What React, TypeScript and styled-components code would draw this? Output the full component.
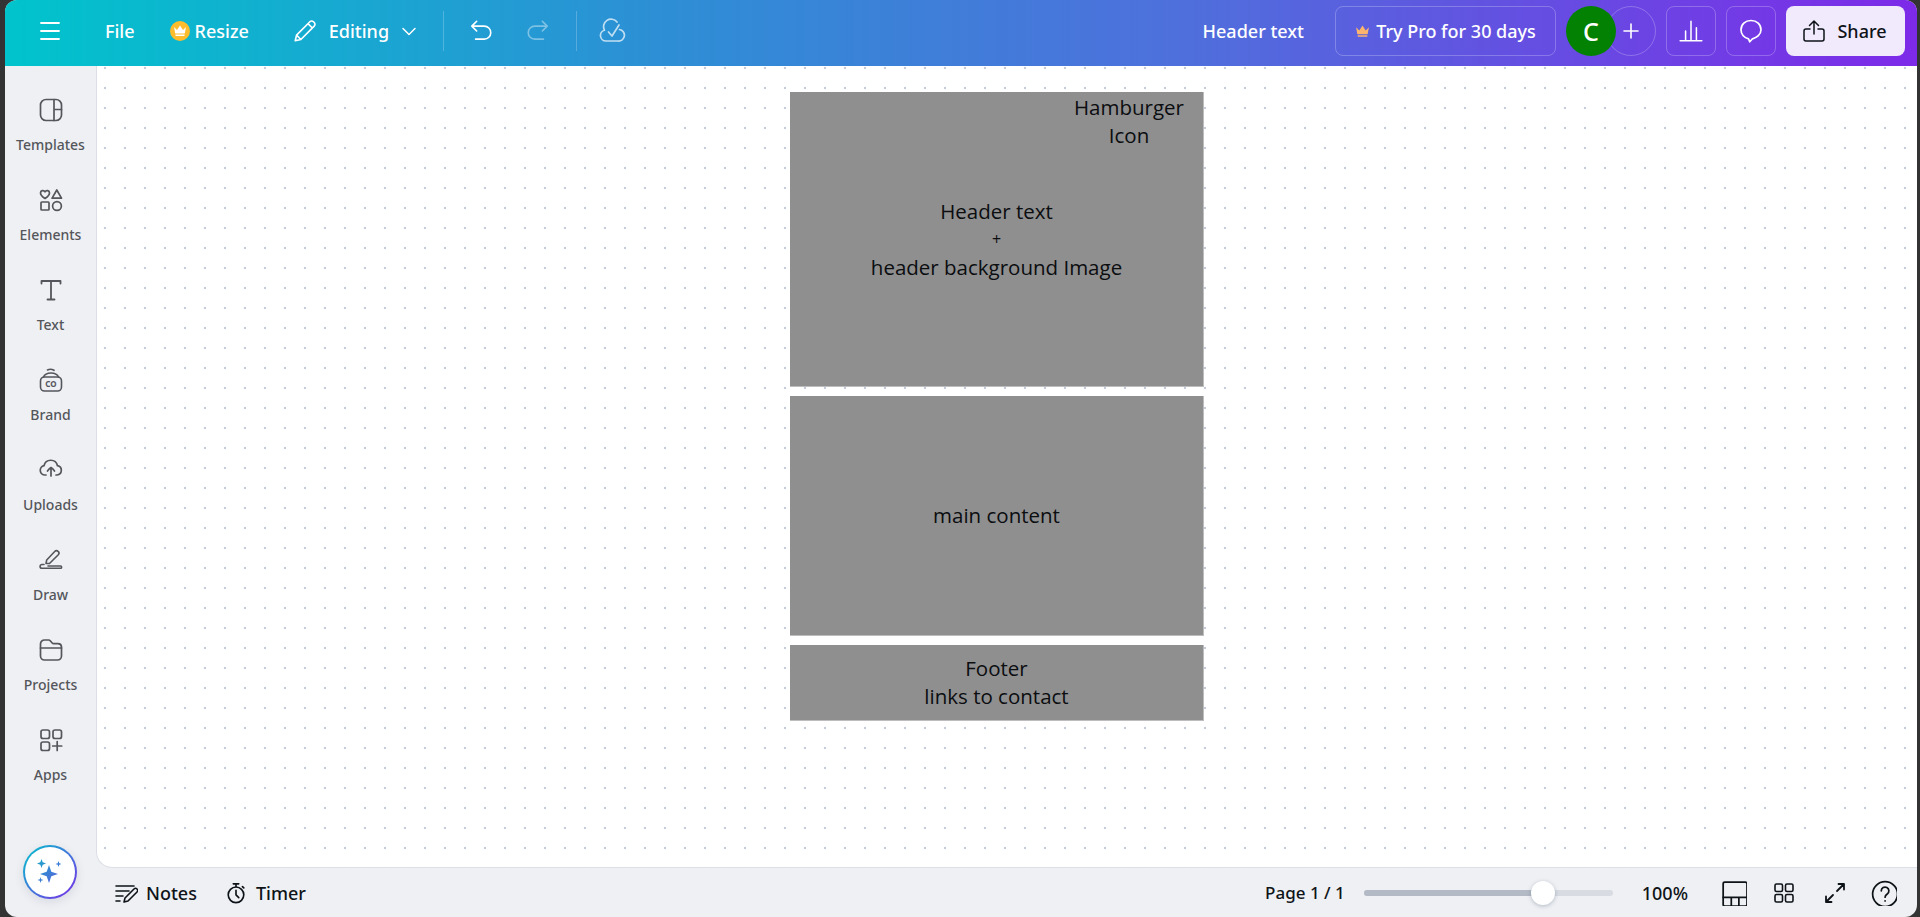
import React from 'react';
import styled, {createGlobalStyle} from 'styled-components';

const GlobalStyle = createGlobalStyle`
  html, body {
    margin: 0;
    height: 100%;
    background: #333;
    overflow: hidden;
  }
  #root {
    height: 100%;
  }
`;

const Window = styled.div`
  width: 1920px;
  height: 917px;
  box-sizing: border-box;
  padding: 0 3px 0 5px;
  font-family: 'Noto Sans', sans-serif;
`;

const Shell = styled.div`
  height: 100%;
  display: flex;
  flex-direction: column;
  border-radius: 12px;
  overflow: hidden;
  background: #eff0f4;
`;

const TopBar = styled.header`
  height: 66px;
  flex: none;
  box-sizing: border-box;
  display: flex;
  align-items: center;
  justify-content: space-between;
  padding: 0 12px 4px 33px;
  color: #fff;
  background: linear-gradient(90deg, #00c4cc 0%, #2d8fd5 34%, #4f6fdc 62%, #7d2ae8 100%);
`;

const BarGroup = styled.div<{$gap?: number}>`
  display: flex;
  align-items: center;
  gap: ${({$gap}) => $gap ?? 0}px;
`;

const IconSlot = styled.span<{$width: number; $after?: number; $fade?: number}>`
  display: inline-flex;
  align-items: center;
  justify-content: center;
  width: ${({$width}) => $width}px;
  margin-right: ${({$after}) => $after ?? 0}px;
  opacity: ${({$fade}) => $fade ?? 1};
`;

const BarLabel = styled.span<{$after?: number}>`
  font-size: 18px;
  font-weight: 500;
  line-height: 24px;
  white-space: nowrap;
  margin-right: ${({$after}) => $after ?? 0}px;
`;

const BarDivider = styled.span<{$after: number}>`
  width: 1px;
  height: 40px;
  margin-right: ${({$after}) => $after}px;
  background: rgba(255, 255, 255, 0.22);
`;

const CrownBadge = styled.span`
  width: 20px;
  height: 20px;
  margin-right: 5px;
  border-radius: 50%;
  display: inline-flex;
  align-items: center;
  justify-content: center;
  background: #fdbc2c;
`;

const ProButton = styled.button`
  width: 221px;
  height: 50px;
  margin-right: 10px;
  display: flex;
  align-items: center;
  justify-content: center;
  gap: 6px;
  padding: 0;
  border: 1px solid rgba(255, 255, 255, 0.24);
  border-radius: 8px;
  color: #fff;
  background: transparent;
  font: 500 18px 'Noto Sans', sans-serif;
`;

const Avatars = styled.div`
  display: flex;
  margin-right: 10px;
`;

const Avatar = styled.span`
  position: relative;
  z-index: 1;
  width: 50px;
  height: 50px;
  border-radius: 50%;
  display: flex;
  align-items: center;
  justify-content: center;
  background: #028102;
  font-size: 25px;
  font-weight: 500;
`;

const AddCircle = styled.span`
  width: 50px;
  height: 50px;
  margin-left: -10px;
  box-sizing: border-box;
  border: 1px solid rgba(255, 255, 255, 0.24);
  border-radius: 50%;
  display: flex;
  align-items: center;
  justify-content: center;
`;

const SquareButton = styled.span`
  width: 50px;
  height: 50px;
  box-sizing: border-box;
  display: flex;
  align-items: center;
  justify-content: center;
  border: 1px solid rgba(255, 255, 255, 0.24);
  border-radius: 8px;
`;

const ShareButton = styled.button`
  width: 119px;
  height: 50px;
  display: flex;
  align-items: center;
  justify-content: center;
  gap: 11px;
  padding: 0 2px 0 0;
  border: 0;
  border-radius: 8px;
  color: #0e1318;
  background: #f1e9fc;
  font: 500 18px 'Noto Sans', sans-serif;
`;

const Body = styled.div`
  flex: 1;
  min-height: 0;
  display: flex;
`;

const SideNav = styled.nav`
  width: 91px;
  flex: none;
  display: flex;
  flex-direction: column;
`;

const NavItem = styled.div`
  height: 90px;
  flex: none;
  display: flex;
  flex-direction: column;
  align-items: center;
  box-sizing: border-box;
  padding-top: 32px;
  color: #54565b;
`;

const NavLabel = styled.span`
  margin-top: 14px;
  font-size: 14px;
  font-weight: 500;
  line-height: 18px;
`;

const MagicButton = styled.span`
  width: 54px;
  height: 54px;
  margin: auto 0 18px 18px;
  box-sizing: border-box;
  border: 2px solid transparent;
  border-radius: 50%;
  display: flex;
  align-items: center;
  justify-content: center;
  background: linear-gradient(#fff, #fff) padding-box, linear-gradient(135deg, #00c4cc, #7d2ae8) border-box;
  box-shadow: 0 3px 10px rgba(64, 87, 109, 0.14);
`;

const Workspace = styled.main`
  flex: 1;
  min-width: 0;
  display: flex;
  flex-direction: column;
`;

const Canvas = styled.section`
  flex: 1;
  min-height: 0;
  display: flex;
  flex-direction: column;
  align-items: flex-start;
  gap: 9px;
  padding: 26px 0 0 693px;
  border-bottom: 1px solid #dcdfe6;
  border-left: 1px solid #dcdfe6;
  border-bottom-left-radius: 16px;
  background-color: #fff;
  background-image: radial-gradient(circle, #c6ccdc 1.1px, transparent 1.6px);
  background-size: 20px 20px;
  background-position: -2px -8px;
`;

const Block = styled.div<{$height: number}>`
  position: relative;
  width: 414px;
  height: ${({$height}) => $height}px;
  flex: none;
  display: flex;
  align-items: center;
  justify-content: center;
  box-sizing: border-box;
  padding-bottom: 1px;
  border-right: 1px solid #bdbdbd;
  border-bottom: 1px solid #bdbdbd;
  background: #8f8f8f;
  color: #0b0d10;
  font-family: 'Open Sans', sans-serif;
  font-size: 20.5px;
  line-height: 28px;
  text-align: center;
`;

const CornerNote = styled.div`
  position: absolute;
  top: 1px;
  right: 19px;
`;

const SmallLine = styled.div`
  font-size: 16px;
`;

const BottomBar = styled.footer`
  height: 49px;
  flex: none;
  box-sizing: border-box;
  display: flex;
  align-items: center;
  justify-content: space-between;
  padding: 0 20px 0 18px;
  color: #0e1318;
  font-size: 18px;
  font-weight: 500;
`;

const ToolLabel = styled.span<{$after?: number; $size?: number}>`
  margin-right: ${({$after}) => $after ?? 0}px;
  font-size: ${({$size}) => $size ?? 18}px;
  white-space: nowrap;
`;

const Slider = styled.div`
  position: relative;
  width: 249px;
  height: 6px;
  margin-right: 29px;
  border-radius: 3px;
  background: #d8dbe2;
`;

const SliderFill = styled.div`
  height: 100%;
  border-radius: 3px;
  background: #b3bac5;
`;

const SliderThumb = styled.span`
  position: absolute;
  top: -9px;
  width: 24px;
  height: 24px;
  margin-left: -12px;
  border-radius: 50%;
  background: #fff;
  box-shadow: 0 1px 4px rgba(64, 87, 109, 0.35);
`;

type IconProps = {size?: number; stroke?: number; children: React.ReactNode; box?: number};

const Line = ({size = 24, stroke = 1.6, box = 24, children}: IconProps) => (
  <svg
    width={size}
    height={size}
    viewBox={`0 0 ${box} ${box}`}
    fill="none"
    stroke="currentColor"
    strokeWidth={stroke}
    strokeLinecap="round"
    strokeLinejoin="round"
  >
    {children}
  </svg>
);

const navItems: {label: string; icon: React.ReactNode}[] = [
  {
    label: 'Templates',
    icon: (
      <Line stroke={1.7}>
        <rect x="1.500" y="1.500" width="21" height="21" rx="5.500" />
        <path d="M15 1.500v21M15 11.500h7.500" />
      </Line>
    ),
  },
  {
    label: 'Elements',
    icon: (
      <Line stroke={1.7}>
        <path d="M6 10.500c-2.800-1.800-4.500-3.300-4.500-5.500a2.400 2.400 0 0 1 4.500-1.200A2.400 2.400 0 0 1 10.500 5c0 2.200-1.700 3.700-4.500 5.500z" />
        <path d="M17.800 2l4.700 8.200h-9.400z" />
        <rect x="2" y="14" width="8" height="8" rx="0.800" />
        <circle cx="18" cy="18" r="4.400" />
      </Line>
    ),
  },
  {
    label: 'Text',
    icon: (
      <Line stroke={1.8}>
        <path d="M2.500 5.500V3h19v2.500M12 3v18.500M8.500 21.500h7" />
      </Line>
    ),
  },
  {
    label: 'Brand',
    icon: (
      <Line stroke={1.6}>
        <rect x="1.500" y="9" width="21" height="14" rx="4" />
        <path d="M4.500 9c1-2.500 4-4 7.500-4s6.500 1.500 7.500 4M8.500 2c2-1 4.500-.8 6.500.300" />
        <text
          x="12"
          y="19"
          fontSize="8"
          fontWeight="700"
          textAnchor="middle"
          fill="currentColor"
          stroke="none"
          fontFamily="'Noto Sans', sans-serif"
        >
          CO
        </text>
      </Line>
    ),
  },
  {
    label: 'Uploads',
    icon: (
      <Line stroke={1.7}>
        <path d="M7 17H6a4.700 4.700 0 0 1-1-9.300 6.900 6.900 0 0 1 13.500 0 4.700 4.700 0 0 1-.5 9.300h-1" />
        <path d="M12 18v-8M8.500 13c1-1.500 2.200-2.800 3.500-3.500 1.300.7 2.500 2 3.500 3.500" />
      </Line>
    ),
  },
  {
    label: 'Draw',
    icon: (
      <Line stroke={1.6}>
        <path d="M10.500 15.500H7l.7-3.500 8-8.500a2.400 2.400 0 0 1 3.600 3.200z" />
        <path d="M5 16.500H3a1.800 1.800 0 0 0 0 3.800h18.500a1 1 0 0 0 0-2.300H9" />
      </Line>
    ),
  },
  {
    label: 'Projects',
    icon: (
      <Line stroke={1.7}>
        <path d="M1.500 8V6a4 4 0 0 1 4-4h4.200a2 2 0 0 1 1.500.700l2 2.300a2 2 0 0 0 1.500.700h4.300a3.500 3.500 0 0 1 3.500 3.300v9a4 4 0 0 1-4 4h-13a4 4 0 0 1-4-4z" />
        <path d="M1.500 10h21" />
      </Line>
    ),
  },
  {
    label: 'Apps',
    icon: (
      <Line stroke={1.7}>
        <rect x="2" y="2" width="8.500" height="8.500" rx="2" />
        <rect x="14" y="2" width="8.500" height="8.500" rx="2" />
        <rect x="2" y="14" width="8.500" height="8.500" rx="2" />
        <path d="M18.200 13.500v9M13.700 18h9" />
      </Line>
    ),
  },
];

const Sparkles = () => (
  <svg width="30" height="30" viewBox="0 0 30 30">
    <defs>
      <linearGradient id="spark" x1="0" y1="0" x2="1" y2="1">
        <stop offset="0" stopColor="#1aa6c9" />
        <stop offset="1" stopColor="#5a5be0" />
      </linearGradient>
    </defs>
    <path
      fill="url(#spark)"
      d="M14 8l2.300 6.700L23 17l-6.700 2.300L14 26l-2.300-6.700L5 17l6.700-2.300zM6.500 2l1.200 3.300L11 6.500 7.700 7.700 6.500 11 5.300 7.700 2 6.500l3.300-1.200zM23.500 4l.8 2.200 2.200.8-2.200.8-.8 2.200-.8-2.200-2.200-.8 2.200-.8zM5.500 20l.7 2.300 2.300.7-2.300.7-.7 2.300-.7-2.300-2.300-.7 2.300-.7z"
    />
  </svg>
);

const App = () => {
  return (
    <Window>
      <GlobalStyle />
      <Shell>
        <TopBar>
          <BarGroup>
            <IconSlot $width={24} $after={43}>
              <Line stroke={1.8}>
                <path d="M3 4h18M3 12h18M3 20h18" />
              </Line>
            </IconSlot>
            <BarLabel $after={35}>File</BarLabel>
            <CrownBadge>
              <svg width="14" height="14" viewBox="0 0 14 14" fill="#fff">
                <path d="M1 3l3 3 3-4.500L10 6l3-3-1.200 6.500H2.200zM2.500 10.500h9V12h-9z" />
              </svg>
            </CrownBadge>
            <BarLabel $after={43}>Resize</BarLabel>
            <IconSlot $width={26} $after={11}>
              <Line size={26} stroke={1.5}>
                <path d="M3 21l1.200-5.200L16.500 3.500a2.300 2.300 0 0 1 3.300 0l.7.700a2.300 2.300 0 0 1 0 3.300L8.200 19.800zM4.200 15.800l4 4M14.800 5.200l4 4" />
              </Line>
            </IconSlot>
            <BarLabel $after={12}>Editing</BarLabel>
            <IconSlot $width={16} $after={26}>
              <Line size={16} box={16} stroke={1.5}>
                <path d="M2 5.500l6 6 6-6" />
              </Line>
            </IconSlot>
            <BarDivider $after={24} />
            <IconSlot $width={26} $after={31}>
              <Line size={26} stroke={1.5}>
                <path d="M8 3L3.500 7.500 8 12M3.500 7.500h11.500a6 6 0 0 1 0 12H7" />
              </Line>
            </IconSlot>
            <IconSlot $width={26} $after={25} $fade={0.4}>
              <Line size={26} stroke={1.5}>
                <path d="M16 3l4.500 4.500L16 12M20.500 7.500H9a6 6 0 0 0 0 12h8" />
              </Line>
            </IconSlot>
            <BarDivider $after={21} />
            <IconSlot $width={28} $fade={0.7}>
              <Line size={28} box={28} stroke={1.7}>
                <path d="M8 24a5.500 5.500 0 0 1-1.500-10.800A7.500 7.500 0 0 1 19 5M21.500 12.500A5.800 5.800 0 0 1 20 24H8" />
                <path d="M10.500 15l3.500 4 7-11" />
              </Line>
            </IconSlot>
          </BarGroup>
          <BarGroup>
            <BarLabel $after={31}>Header text</BarLabel>
            <ProButton>
              <svg width="15" height="15" viewBox="0 0 14 14" fill="#fdb46c">
                <path d="M1 3l3 3 3-4.500L10 6l3-3-1.200 6.500H2.200zM2.500 10.500h9V12h-9z" />
              </svg>
              Try Pro for 30 days
            </ProButton>
            <Avatars>
              <Avatar>C</Avatar>
              <AddCircle>
                <Line size={20} box={20} stroke={1.6}>
                  <path d="M10 3v14M3 10h14" />
                </Line>
              </AddCircle>
            </Avatars>
            <BarGroup $gap={10}>
              <SquareButton>
                <Line size={26} stroke={1.4}>
                  <path d="M2 21h20M7 20V12M12 20V3M17 20V9" />
                </Line>
              </SquareButton>
              <SquareButton>
                <Line size={28} box={28} stroke={1.7}>
                  <path d="M14 3.500c-5.800 0-10 3.900-10 9.300 0 4.700 3.300 8.200 7.500 9l1.300 3 2.700-3c4.200-1 8.500-4.300 8.500-9 0-5.400-4.200-9.300-10-9.300z" />
                </Line>
              </SquareButton>
              <ShareButton>
                <Line size={24} stroke={1.5}>
                  <path d="M12 15V2M7.500 6.500L12 2l4.500 4.500M8 10H4a2 2 0 0 0-2 2v8a2 2 0 0 0 2 2h16a2 2 0 0 0 2-2v-8a2 2 0 0 0-2-2h-4" />
                </Line>
                Share
              </ShareButton>
            </BarGroup>
          </BarGroup>
        </TopBar>
        <Body>
          <SideNav>
            {navItems.map(item => (
              <NavItem key={item.label}>
                {item.icon}
                <NavLabel>{item.label}</NavLabel>
              </NavItem>
            ))}
            <MagicButton>
              <Sparkles />
            </MagicButton>
          </SideNav>
          <Workspace>
            <Canvas>
              <Block $height={295}>
                <CornerNote>
                  Hamburger
                  <br />
                  Icon
                </CornerNote>
                <div>
                  Header text
                  <SmallLine>+</SmallLine>
                  header background Image
                </div>
              </Block>
              <Block $height={240}>main content</Block>
              <Block $height={76}>
                <div>
                  Footer
                  <br />
                  links to contact
                </div>
              </Block>
            </Canvas>
            <BottomBar>
              <BarGroup>
                <IconSlot $width={24} $after={8}>
                  <Line stroke={1.6}>
                    <path d="M2 5h18M2 10h13M2 15h7M2 20h4M10 21l1-4 9-9a2 2 0 0 1 3 3l-9 9z" />
                  </Line>
                </IconSlot>
                <ToolLabel $after={28}>Notes</ToolLabel>
                <IconSlot $width={22} $after={9}>
                  <Line stroke={1.8}>
                    <circle cx="12" cy="14" r="8.500" />
                    <path d="M9 2h6M12 2v3M12 9v5l3 3M19 5l1.500 1.500" />
                  </Line>
                </IconSlot>
                <ToolLabel>Timer</ToolLabel>
              </BarGroup>
              <BarGroup>
                <ToolLabel $after={19} $size={17}>
                  Page 1 / 1
                </ToolLabel>
                <Slider>
                  <SliderFill style={{width: '72%'}} />
                  <SliderThumb style={{left: '72%'}} />
                </Slider>
                <ToolLabel $after={33}>100%</ToolLabel>
                <IconSlot $width={26} $after={25}>
                  <Line size={26} stroke={1.6}>
                    <rect x="2" y="2" width="22" height="22" rx="1.500" />
                    <path d="M2 16h22M9.500 16v8M16.500 16v8" />
                  </Line>
                </IconSlot>
                <IconSlot $width={24} $after={27}>
                  <Line stroke={1.6}>
                    <rect x="3" y="3" width="7.500" height="7.500" rx="1.500" />
                    <rect x="13.500" y="3" width="7.500" height="7.500" rx="1.500" />
                    <rect x="3" y="13.500" width="7.500" height="7.500" rx="1.500" />
                    <rect x="13.500" y="13.500" width="7.500" height="7.500" rx="1.500" />
                  </Line>
                </IconSlot>
                <IconSlot $width={24} $after={24}>
                  <Line stroke={1.8}>
                    <path d="M14 10l7-7M15.500 3H21v5.500M10 14l-7 7M8.500 21H3v-5.500" />
                  </Line>
                </IconSlot>
                <IconSlot $width={26}>
                  <Line size={26} stroke={1.6}>
                    <circle cx="13" cy="13" r="11.500" />
                    <path d="M9.500 10a3.500 3.500 0 1 1 5.500 2.900c-1.200.8-2 1.500-2 3" />
                    <path d="M13 19.200v.1" />
                  </Line>
                </IconSlot>
              </BarGroup>
            </BottomBar>
          </Workspace>
        </Body>
      </Shell>
    </Window>
  );
};

export default App;
